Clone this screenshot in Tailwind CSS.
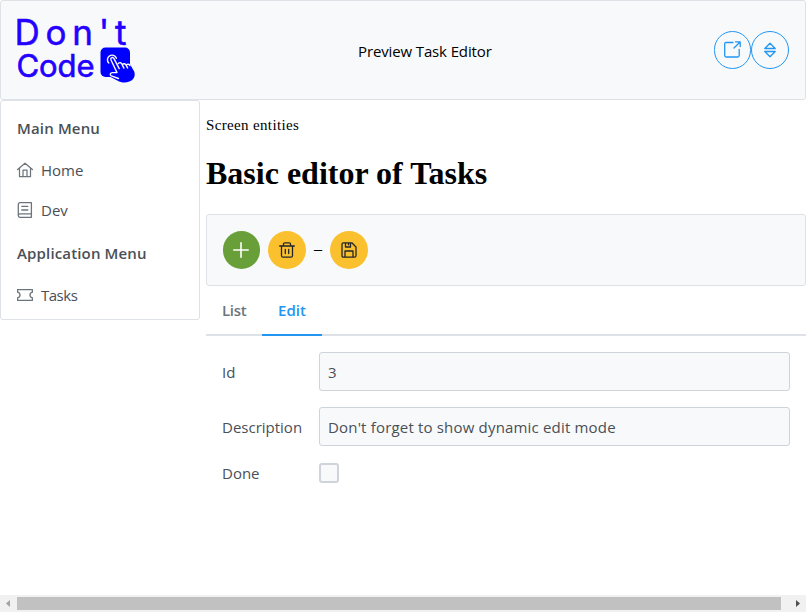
<!DOCTYPE html>
<html lang="en">
<head>
<meta charset="utf-8">
<title>Preview Task Editor</title>
<script src="https://cdn.jsdelivr.net/npm/@tailwindcss/browser@4"></script>
</head>
<body class="flex h-[612px] w-[806px] flex-col overflow-hidden bg-white font-['Open_Sans','Noto_Sans',sans-serif] text-[15px] leading-6 text-[#495057]">
<header class="flex h-[100px] shrink-0 items-center justify-between rounded-[3px] border border-[#dee2e6] bg-[#f8f9fa] pr-4">
  <svg class="h-[98px] w-[140px]" viewBox="1 1 140 98" fill="#2300ff" font-family="Inter, sans-serif" role="img" aria-label="Don't Code">
    <text x="14.500" y="44.500" font-size="35" stroke="#2300ff" stroke-width=".5" textLength="112" lengthAdjust="spacing">Don't</text>
    <text x="16.500" y="76.500" font-size="31" stroke="#2300ff" stroke-width=".6" textLength="78" lengthAdjust="spacing">Code</text>
    <rect x="100.500" y="47.500" width="29.500" height="29.500" rx="5" fill="#0000ff"/>
    <path d="M110 63.500a4.700 4.700 0 1 1 7-5.500l3 5c1-1.300 2.700-1.100 3.500.2 1-1.100 2.700-.9 3.500.5 1.200-.8 2.600-.3 3.300 1l4 7c1.500 5-1.300 8.700-5 9.800-3.800 1.700-8 1.300-12-1l-6.700-3.500c-2-1-1.200-3.500 1-3.700l4.700.2z" fill="#0000ff"/>
    <path d="M118.500 78.500l-7.200-2.700c-1.800-1-1-3 1-3.200h4.700l-6-12.600c-.9-2.200 1.900-3.500 3-1.400l5.200 10M118.300 63.500c1.600-1.600 3.100-.6 3.600.6l2 4M122.400 64.500c1.300-1.400 2.900-.8 3.500.4l1.700 3M126.300 65c1.300-1.300 3-.8 3.700.6M108.800 63a4.600 4.600 0 1 1 7.600-4.700" fill="none" stroke="#f8f9fa" stroke-width="1.400" stroke-linecap="round" stroke-linejoin="round"/>
  </svg>
  <div class="relative top-px mr-[5px] w-[134px] whitespace-nowrap tracking-[-0.13px] text-black">Preview Task Editor</div>
  <div class="mb-px flex text-[#2196f3]">
    <button class="flex h-[38px] w-[37px] items-center justify-center rounded-full border border-current" aria-label="Open">
      <svg class="size-[17px]" viewBox="0 0 17 17" fill="none" stroke="currentColor" stroke-width="1.300" stroke-linecap="round" stroke-linejoin="round"><path d="M9 1.500H2C1 1.500.700 2 .700 3v11.500c0 1 .5 1.500 1.500 1.500h11.500c1 0 1.500-.5 1.500-1.500V8.500M11.500.800h4.700v4.700M16 1L10 7"/></svg>
    </button>
    <button class="flex size-[38px] items-center justify-center rounded-full border border-current" aria-label="Sort">
      <svg class="h-4 w-3" viewBox="0 0 12 16" fill="none" stroke="currentColor" stroke-width="1.300" stroke-linejoin="round"><path d="M.8 6.500L6 1.200l5.200 5.300zM.8 9.500h10.400L6 14.800z"/></svg>
    </button>
  </div>
</header>
<div class="flex min-h-0 flex-1 items-start gap-1.5">
  <nav class="h-[220px] w-[200px] shrink-0 rounded-[3px] border border-[#dee2e6] px-4 pt-[7px]">
    <div class="flex h-10 items-center font-semibold tracking-[0.15px]">Main Menu</div>
    <div class="mt-0.5 flex h-10 items-center gap-2">
      <svg class="size-4 text-[#6c757d]" viewBox="0 0 16 16" fill="none" stroke="currentColor" stroke-width="1.250" stroke-linejoin="round" stroke-linecap="round"><path d="M.6 7.500L8 1.200l7.400 6.300M2.500 6v8.500h11V6M6 14.300V8h4v6.300"/></svg>
      <span>Home</span>
    </div>
    <div class="flex h-10 items-center gap-2">
      <svg class="size-4 text-[#6c757d]" viewBox="0 0 16 16" fill="none" stroke="currentColor" stroke-width="1.300" stroke-linejoin="round" stroke-linecap="round"><path d="M14.400.700H3C2 .700 1.300 1.400 1.300 2.400v11.200c0 1 .7 1.700 1.700 1.700h11.400zM1.500 12.700c.3-.6.800-.9 1.500-.9h11.200M4.800 4.300h6M4.800 8h6"/></svg>
      <span>Dev</span>
    </div>
    <div class="mt-[3px] flex h-10 items-center font-semibold tracking-[0.15px]">Application Menu</div>
    <div class="mt-0.5 flex h-10 items-center gap-2">
      <svg class="size-4 text-[#6c757d]" viewBox="0 0 16 16" fill="none" stroke="currentColor" stroke-width="1.300" stroke-linejoin="round"><path d="M.6 2.600h14.800v2.600c-3.200.7-3.200 4.900 0 5.600v2.600H.6v-2.600c3.200-.7 3.200-4.900 0-5.600z"/></svg>
      <span class="tracking-[-0.5px]">Tasks</span>
    </div>
  </nav>
  <main class="min-w-0 flex-1">
    <div class="mt-[13px] font-['Liberation_Serif',serif] text-[15px] tracking-[0.350px] text-black">Screen entities</div>
    <h1 class="mt-[17px] h-10 font-['Liberation_Serif',serif] text-[32px] leading-[39px] font-bold text-black">Basic editor of Tasks</h1>
    <div class="mt-5 flex h-[72px] items-center rounded-[3px] border border-[#dee2e6] bg-[#f8f9fa] pl-4 text-[#212529]">
      <button class="flex h-[38px] w-[37px] items-center justify-center rounded-full bg-[#689f38] text-white" aria-label="Add">
        <svg class="mr-px size-4" viewBox="0 0 16 16" stroke="currentColor" stroke-width="1.600" stroke-linecap="round"><path d="M8 .8v14.400M.8 8h14.400"/></svg>
      </button>
      <button class="ml-2 flex size-[38px] items-center justify-center rounded-full bg-[#fbc02d]" aria-label="Delete">
        <svg class="size-4" viewBox="0 0 16 16" fill="none" stroke="currentColor" stroke-width="1.300" stroke-linecap="round" stroke-linejoin="round"><path d="M.7 4h14.600M2.500 4v9.700c0 1 .5 1.500 1.500 1.500h8c1 0 1.500-.5 1.500-1.500V4M4.500 4V2c0-.8.500-1.200 1.200-1.200h4.600c.7 0 1.200.4 1.200 1.200v2M6.300 7.500v4M9.700 7.500v4"/></svg>
      </button>
      <span class="flex w-6 justify-center text-black"><span class="h-[26px] font-['Liberation_Serif',serif] text-[16px]">–</span></span>
      <button class="flex size-[38px] items-center justify-center rounded-full bg-[#fbc02d]" aria-label="Save">
        <svg class="size-4" viewBox="0 0 16 16" fill="none" stroke="currentColor" stroke-width="1.300" stroke-linejoin="round"><path d="M2.500.8h8.300L15 5v8.700c0 1-.5 1.500-1.500 1.500h-11c-1 0-1.500-.5-1.500-1.500V2.300C1 1.300 1.500.8 2.500.8zM4 15V9h8v6M4.500 1v4h5V1M7.500 1.500v1.700"/></svg>
      </button>
    </div>
    <div class="flex h-[50px] border-b-2 border-[#dee2e6] font-semibold">
      <div class="h-[50px] w-14 pt-3 pl-4 tracking-[-0.3px] text-[#6c757d]">List</div>
      <div class="h-[50px] w-[60px] border-b-2 border-[#2196f3] pt-3 text-center text-[#2196f3]">Edit</div>
    </div>
    <div class="grid grid-cols-[97px_471px] items-center gap-y-4 px-4 pt-4">
      <label for="id">Id</label>
      <input id="id" value="3" class="h-[39px] rounded-[3px] border border-[#ced4da] bg-[#f8f9fa] px-2">
      <label for="desc">Description</label>
      <input id="desc" value="Don't forget to show dynamic edit mode" class="h-[39px] rounded-[3px] border border-[#ced4da] bg-[#f8f9fa] px-2 tracking-[0.18px]">
      <span class="flex h-[22px] items-center">Done</span>
      <span class="size-5 rounded-[3px] border-2 border-[#ced4da] bg-[#f8f9fa]"></span>
    </div>
  </main>
</div>
<div class="flex h-[17px] shrink-0 items-center justify-between bg-[#f1f1f1]">
  <svg class="h-[7px] w-[17px] shrink-0" viewBox="0 0 17 7" fill="#a3a3a3"><path d="M10 0v7L6 3.500z"/></svg>
  <div class="h-[13px] w-[764px] bg-[#c1c1c1]"></div>
  <svg class="h-[7px] w-[25px] shrink-0" viewBox="0 0 25 7" fill="#505050"><path d="M15 0v7l4-3.500z"/></svg>
</div>
</body>
</html>
